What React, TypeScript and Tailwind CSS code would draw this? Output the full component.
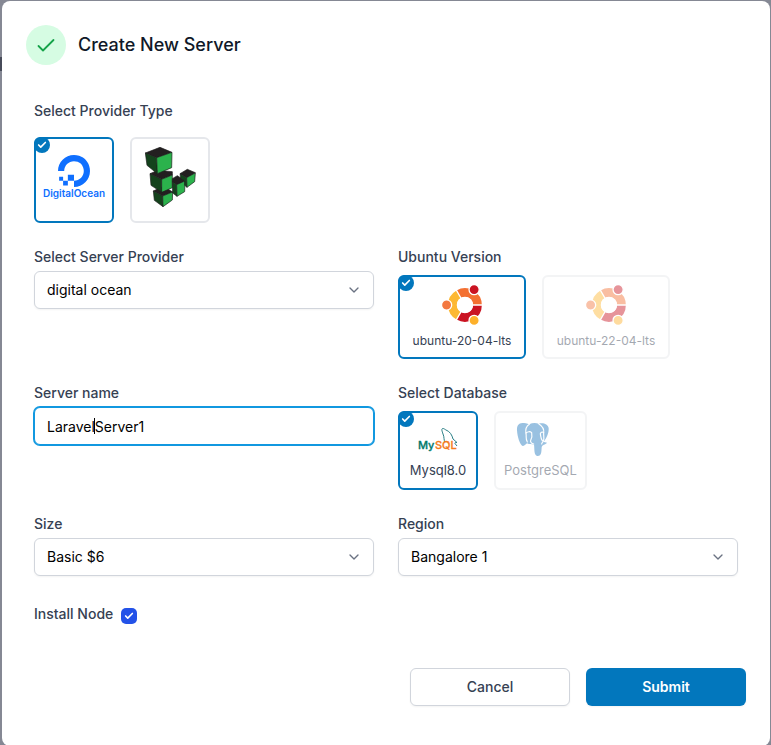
import { useState, type ReactNode } from "react";
import { Check, ChevronDown } from "lucide-react";
import { SiDigitalocean } from "react-icons/si";

const labelClass = "block text-sm font-medium text-gray-700";
const fieldClass =
  "h-[38px] w-full appearance-none rounded-md border border-gray-300 bg-white px-3 text-sm text-black shadow-xs outline-none";

function DigitalOceanLogo() {
  return (
    <span className="flex flex-col items-center text-[#0f6fff]">
      <SiDigitalocean className="size-8" aria-hidden="true" />
      <span className="text-[10px] leading-3 font-semibold">DigitalOcean</span>
    </span>
  );
}

function LinodeLogo() {
  return (
    <svg viewBox="375 50 153 180" className="h-[60px] w-[51px]" aria-hidden="true">
      <g stroke="#1c1c1c" strokeWidth="2" strokeLinejoin="round">
        <path d="M400 182 430 168 458 185 428 197Z" fill="#231f20" />
        <path d="M400 182 428 197 429 229 403 210Z" fill="#14421c" />
        <path d="M428 197 458 185 457 209 429 229Z" fill="#2bb24c" />

        <path d="M390 130 414 120 457 124 457 134 425 147Z" fill="#231f20" />
        <path d="M390 130 425 147 425 186 393 165Z" fill="#14421c" />
        <path d="M425 147 457 134 457 172 425 186Z" fill="#2bb24c" />

        <path d="M376 68 420 51 456 66 410 82Z" fill="#231f20" />
        <path d="M376 68 410 82 412 130 381 105Z" fill="#14421c" />
        <path d="M410 82 456 66 455 112 412 130Z" fill="#2bb24c" />

        <path d="M457 145 472 136 496 152 470 163 457 154Z" fill="#231f20" />
        <path d="M457 154 470 163 471 198 458 188Z" fill="#14421c" />
        <path d="M470 163 495 152 494 184 471 198Z" fill="#2bb24c" />

        <path d="M480 130 502 117 526 127 500 142Z" fill="#231f20" />
        <path d="M480 130 500 142 501 171 494 165 494 152 482 144Z" fill="#14421c" />
        <path d="M500 142 526 128 524 154 501 171Z" fill="#2bb24c" />
      </g>
    </svg>
  );
}

function UbuntuLogo() {
  return (
    <svg viewBox="155 134 122 122" className="size-10" aria-hidden="true">
      <g fill="none" strokeWidth="27">
        <path d="M206 162.100A38 38 0 0 1 263 195" stroke="#f37032" />
        <path d="M263 195A38 38 0 0 1 206 227.900" stroke="#ca1322" />
        <path d="M206 227.900A38 38 0 0 1 206 162.100" stroke="#fdb833" />
      </g>
      <path d="M225 195H280M225 195 197 146.500M225 195 197 243.500" stroke="#fff" strokeWidth="4" />
      <circle cx="225" cy="195" r="25" fill="#fff" />
      <g stroke="#fff" strokeWidth="4">
        <circle cx="169" cy="195" r="15.500" fill="#f37840" />
        <circle cx="253" cy="148" r="15.500" fill="#ca1322" />
        <circle cx="253" cy="242" r="15.500" fill="#fdb02a" />
      </g>
    </svg>
  );
}

function MySqlLogo() {
  return (
    <svg viewBox="0 0 42 26" className="h-[26px] w-[42px]" aria-hidden="true">
      <path
        d="M28 15C26.500 13 27.500 10 26 7C25 4 24 1.500 26 1.500C27 1.500 28 2.500 29 3C33 4.500 35 8 36 12C37 13.500 39 14 40 15.500C38.500 15.500 37.500 15.500 38 16.500L40 19"
        fill="none"
        stroke="#2a7f86"
        strokeWidth="1"
      />
      <text x="1" y="22" className="font-['Inter',sans-serif] text-[11px] font-medium" fill="#00796b" stroke="#00796b" strokeWidth=".3">
        My
      </text>
      <text x="18" y="22" className="font-['Inter',sans-serif] text-[11px] font-medium" fill="#f47b20" stroke="#f47b20" strokeWidth=".3">
        SQL
      </text>
    </svg>
  );
}

function PostgresLogo() {
  return (
    <svg viewBox="18 22 99 105" className="h-[35px] w-[33px]" aria-hidden="true">
      <path
        d="M37 25C26 25 20 34 21 47C22 66 30 92 38 94C44 95 47 88 51 86C58 91 66 88 72 90C74 102 71 122 82 124C95 125 94 112 95 98C96 90 106 90 111 84C108 82 101 83 101 81C110 71 117 54 116 40C114 28 99 23 86 27C75 24 66 25 58 29C51 26 44 25 37 25Z"
        fill="#1f78bd"
      />
      <g fill="none" stroke="#fff" strokeWidth="3.500" strokeLinecap="round" strokeLinejoin="round">
        <path d="M58 29C48 35 46 46 48 57C50 68 46 72 52 82" />
        <path d="M48 55C53 50 61 50 65 54C67 64 65 72 62 77C60 82 65 86 71 88" />
        <path d="M86 27C97 34 103 44 101 55C100 64 104 71 100 80C97 83 95 84 95 88" />
        <path d="M101 53C96 51 92 53 91 57C92 66 93 74 98 79" />
      </g>
    </svg>
  );
}

type CardProps = {
  name: string;
  value: string;
  selected: boolean;
  dimmed?: boolean;
  onSelect: (value: string) => void;
  className: string;
  children: ReactNode;
};

function OptionCard({ name, value, selected, dimmed, onSelect, className, children }: CardProps) {
  return (
    <label
      className={`relative flex cursor-pointer flex-col items-center rounded-md border-2 leading-6 text-gray-700 ${
        selected ? "border-[#0277bd]" : "border-gray-200"
      } ${dimmed && !selected ? "opacity-45" : ""} ${className}`}
    >
      <input
        type="radio"
        name={name}
        value={value}
        aria-label={value}
        checked={selected}
        onChange={() => onSelect(value)}
        className="sr-only"
      />
      {selected && (
        <span className="absolute -top-0.5 -left-0.5 flex size-4 items-center justify-center rounded-full bg-[#0277bd]">
          <Check className="size-2.5 text-white" strokeWidth={4} />
        </span>
      )}
      {children}
    </label>
  );
}

function SelectField({ id, label, options }: { id: string; label: string; options: string[] }) {
  return (
    <div>
      <label htmlFor={id} className={labelClass}>
        {label}
      </label>
      <div className="relative mt-1">
        <select id={id} className={fieldClass}>
          {options.map((option) => (
            <option key={option}>{option}</option>
          ))}
        </select>
        <ChevronDown className="pointer-events-none absolute top-[11px] right-3 size-4 text-gray-500" />
      </div>
    </div>
  );
}

export default function App() {
  const [provider, setProvider] = useState("DigitalOcean");
  const [version, setVersion] = useState("ubuntu-20-04-lts");
  const [database, setDatabase] = useState("Mysql8.0");

  return (
    <div className="relative h-screen overflow-y-auto bg-[#858894] pt-px pr-px pl-0.5 font-['Inter',sans-serif] [scrollbar-width:none]">
      <div className="absolute top-[57px] left-0 h-3.5 w-0.5 bg-[#474b59]" />
      <div role="dialog" aria-labelledby="dialog-title" className="relative rounded-lg bg-white px-6 pt-6 pb-10">
        <header className="flex items-center gap-3">
          <span className="flex size-10 items-center justify-center rounded-full bg-[#d6fce3]">
            <svg viewBox="0 0 24 24" className="size-6" fill="none" stroke="#16a34a" strokeWidth="1.8" strokeLinecap="round" strokeLinejoin="round" aria-hidden="true">
              <path d="M4.500 13 9 17.500 19.500 7" />
            </svg>
          </span>
          <h1 id="dialog-title" className="text-lg leading-6 font-medium text-gray-900">
            Create New Server
          </h1>
        </header>

        <form onSubmit={(event) => event.preventDefault()}>
          <div className="mt-9 grid grid-cols-2 gap-6 px-2">
            <fieldset className="col-span-2">
              <legend className={labelClass}>Select Provider Type</legend>
              <div className="mt-4 flex gap-4">
                <OptionCard name="provider" value="DigitalOcean" selected={provider === "DigitalOcean"} onSelect={setProvider} className="h-[86px] w-20 pt-4">
                  <DigitalOceanLogo />
                </OptionCard>
                <OptionCard name="provider" value="Linode" selected={provider === "Linode"} onSelect={setProvider} className="h-[86px] w-20 pt-2">
                  <LinodeLogo />
                </OptionCard>
              </div>
            </fieldset>

            <SelectField id="server-provider" label="Select Server Provider" options={["digital ocean"]} />

            <fieldset>
              <legend className={labelClass}>Ubuntu Version</legend>
              <div className="mt-2 flex gap-4">
                {["ubuntu-20-04-lts", "ubuntu-22-04-lts"].map((value) => (
                  <OptionCard key={value} name="version" value={value} selected={version === value} dimmed onSelect={setVersion} className="w-32 pt-2 pb-1 text-xs leading-6">
                    <UbuntuLogo />
                    <span className="mt-1">{value}</span>
                  </OptionCard>
                ))}
              </div>
            </fieldset>

            <div>
              <label htmlFor="server-name" className={labelClass}>
                Server name
              </label>
              <div className="relative mt-1">
                <input
                  id="server-name"
                  type="text"
                  defaultValue="LaravelServer1"
                  className="h-[38px] w-full rounded-md border border-[#1198e0] bg-white px-3 text-sm text-black ring-1 ring-[#1198e0] outline-none"
                />
                <span className="pointer-events-none absolute top-[11px] left-[60px] h-4 w-px bg-black" />
              </div>
            </div>

            <fieldset>
              <legend className={labelClass}>Select Database</legend>
              <div className="mt-2 flex gap-4">
                <OptionCard name="database" value="Mysql8.0" selected={database === "Mysql8.0"} dimmed onSelect={setDatabase} className="min-w-20 px-2 pt-2 pb-1.5 text-[13px]">
                  <span className="flex h-[37px] items-center">
                    <MySqlLogo />
                  </span>
                  <span>Mysql8.0</span>
                </OptionCard>
                <OptionCard name="database" value="PostgreSQL" selected={database === "PostgreSQL"} dimmed onSelect={setDatabase} className="min-w-20 px-2 pt-2 pb-1.5 text-[13px]">
                  <span className="flex h-[37px] w-full items-center pl-3">
                    <PostgresLogo />
                  </span>
                  <span>PostgreSQL</span>
                </OptionCard>
              </div>
            </fieldset>

            <SelectField id="size" label="Size" options={["Basic $6"]} />
            <SelectField id="region" label="Region" options={["Bangalore 1"]} />

            <div className="col-span-2 flex h-6 items-end gap-2">
              <label htmlFor="install-node" className={labelClass}>
                Install Node
              </label>
              <span className="relative size-4">
                <input id="install-node" type="checkbox" defaultChecked className="peer block size-4 appearance-none rounded-[5px] border border-gray-300 checked:border-transparent checked:bg-[#2352e8]" />
                <Check className="pointer-events-none absolute inset-[3px] hidden size-2.5 text-white peer-checked:block" strokeWidth={4} />
              </span>
            </div>
          </div>

          <div className="mt-11 flex justify-end gap-4">
            <button type="button" className="h-[38px] w-40 rounded-md border border-gray-300 bg-white text-sm font-medium text-gray-700 shadow-xs">
              Cancel
            </button>
            <button type="submit" className="h-[38px] w-40 rounded-md bg-[#0277bd] text-sm font-semibold text-white shadow-xs">
              Submit
            </button>
          </div>
        </form>
      </div>
    </div>
  );
}
